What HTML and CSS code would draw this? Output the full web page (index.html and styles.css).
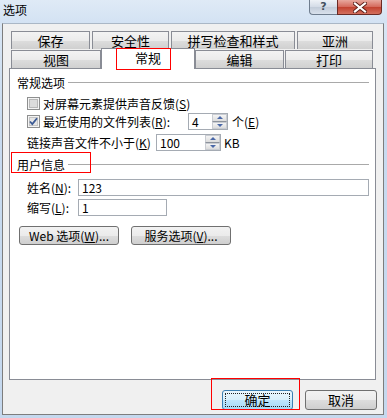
FILE: index.html
```html
<!DOCTYPE html>
<html lang="zh-CN">
<head>
  <meta charset="UTF-8">
  <title>选项</title>
  <link rel="stylesheet" href="styles.css">
</head>
<body>

  <div class="window">
    <div class="titlebar">
      <span class="title">选项</span>
      <div class="caption-btns">
        <div class="cap-help">?</div>
        <div class="cap-close">
          <svg width="14" height="11" viewBox="0 0 14 11">
            <path d="M2 1.5 L12 9.5 M12 1.5 L2 9.5" stroke="#5a1e18" stroke-width="4" stroke-linecap="square"/>
            <path d="M2 1.5 L12 9.5 M12 1.5 L2 9.5" stroke="#ffffff" stroke-width="2.2" stroke-linecap="square"/>
          </svg>
        </div>
      </div>
    </div>

    <div class="dialog">
      <div class="tabs">
        <div class="tab-row">
          <div class="tab w79">保存</div>
          <div class="tab w77">安全性</div>
          <div class="tab w124">拼写检查和样式</div>
          <div class="tab w76">亚洲</div>
        </div>
        <div class="tab-row row2">
          <div class="tab w90">视图</div>
          <div class="tab tab-active w94">常规</div>
          <div class="tab w89">编辑</div>
          <div class="tab w88 ml1">打印</div>
        </div>
      </div>

      <div class="panel">
        <div class="group-head">
          <span>常规选项</span>
          <span class="rule"></span>
        </div>

        <div class="row row1">
          <span class="check">
            <svg width="13" height="13" viewBox="0 0 13 13">
              <rect x="0.5" y="0.5" width="12" height="12" fill="#f4f4f4" stroke="#8e8f8f"/>
              <rect x="2.5" y="2.5" width="8" height="8" fill="#dcdcdc" stroke="#b8b8b8"/>
            </svg>
          </span>
          <span>对屏幕元素提供声音反馈(<u>S</u>)</span>
        </div>

        <div class="row row2">
          <span class="check">
            <svg width="13" height="13" viewBox="0 0 13 13">
              <rect x="0.5" y="0.5" width="12" height="12" fill="#f4f4f4" stroke="#8e8f8f"/>
              <rect x="2.5" y="2.5" width="8" height="8" fill="#e6e6e6" stroke="#c4c4c4"/>
              <path d="M3 6.5 L5.3 9 L10 3.2" fill="none" stroke="#3b5a94" stroke-width="1.8"/>
            </svg>
          </span>
          <span class="lbl-recent">最近使用的文件列表(<u>R</u>):</span>
          <div class="spin w40">
            <span class="spin-val">4</span>
            <div class="spin-btns">
              <span class="spin-up"></span>
              <span class="spin-down"></span>
            </div>
          </div>
          <span class="after">个(<u>E</u>)</span>
        </div>

        <div class="row row3">
          <span class="lbl-sound">链接声音文件不小于(<u>K</u>)</span>
          <div class="spin w65">
            <span class="spin-val">100</span>
            <div class="spin-btns">
              <span class="spin-up"></span>
              <span class="spin-down"></span>
            </div>
          </div>
          <span class="after kb">KB</span>
        </div>

        <div class="group-head head2">
          <span>用户信息</span>
          <span class="rule"></span>
        </div>

        <div class="field first">
          <span class="field-lbl">姓名(<u>N</u>):</span>
          <div class="textbox tb-name">123</div>
        </div>
        <div class="field">
          <span class="field-lbl">缩写(<u>L</u>):</span>
          <div class="textbox tb-init">1</div>
        </div>

        <div class="btn-row">
          <button class="btn w100">Web 选项(<u>W</u>)...</button>
          <button class="btn w100">服务选项(<u>V</u>)...</button>
        </div>
      </div>

      <div class="footer">
        <button class="btn btn-ok"><span class="focus">确定</span></button>
        <button class="btn btn-cancel">取消</button>
      </div>
    </div>

    <div class="mark mark-tab"></div>
    <div class="mark mark-user"></div>
    <div class="mark mark-ok"></div>
  </div>

</body>
</html>
```

FILE: styles.css
```css
* {
  margin: 0;
  padding: 0;
  box-sizing: border-box;
}

body {
  font-family: "Noto Sans CJK SC", "Liberation Sans", sans-serif;
  font-size: 12px;
  color: #000;
  background: #fff;
}

.window {
  position: relative;
  width: 387px;
  height: 418px;
  background: linear-gradient(#dce8f5, #c8dbf0 30%, #c5d8ee);
  overflow: hidden;
}

/* title bar */
.titlebar {
  height: 23px;
  display: flex;
  align-items: flex-start;
  background: linear-gradient(#dfeaf6, #d3e2f3);
}

.title {
  padding: 3px 0 0 3px;
  line-height: 14px;
  font-size: 12px;
}

.caption-btns {
  margin-left: auto;
  margin-right: 5px;
  display: flex;
}

.cap-help {
  width: 28px;
  height: 15px;
  border: 1px solid #6f7d8e;
  border-top: none;
  border-right: none;
  border-radius: 0 0 0 4px;
  background: linear-gradient(#eef2f7, #d3dbe6 50%, #c2ccd9 51%, #d9e1ec);
  text-align: center;
  line-height: 13px;
  font-family: "DejaVu Sans", sans-serif;
  font-size: 11px;
  font-weight: bold;
  color: #44505e;
}

.cap-close {
  width: 45px;
  height: 15px;
  border: 1px solid #6b2a24;
  border-top: none;
  border-radius: 0 0 4px 0;
  background: linear-gradient(#e8a89e, #d4685a 50%, #c2412f 51%, #d3705e);
  display: flex;
  align-items: center;
  justify-content: center;
}

/* dialog body */
.dialog {
  margin: 0 3px 0 2px;
  height: 392px;
  border: 1px solid #7d7d7d;
  border-top-color: #aab7c6;
  background: #f0f0f0;
  padding: 7px 0 0 6px;
}

.tabs {
  padding-left: 2px;
}

.tab-row {
  display: flex;
  gap: 2px;
  height: 18px;
}

.tab-row.row2 {
  gap: 0;
}

.tab {
  height: 18px;
  border: 1px solid #898c95;
  border-bottom: none;
  background: linear-gradient(#f3f3f3, #ebebeb 50%, #dddddd 51%, #d0d0d0);
  font-size: 13px;
  line-height: 17px;
  text-align: center;
  flex-shrink: 0;
}

.tab-active {
  position: relative;
  z-index: 2;
  align-self: flex-start;
  height: 21px;
  margin-top: -2px;
  background: #fff;
  line-height: 18px;
}

.w79 { width: 79px; }
.w77 { width: 77px; }
.w124 { width: 124px; }
.w76 { width: 76px; }
.w90 { width: 90px; }
.w94 { width: 94px; }
.w89 { width: 89px; }
.w88 { width: 88px; }
.ml1 { margin-left: 1px; }

/* page of options */
.panel {
  position: relative;
  z-index: 1;
  width: 367px;
  height: 312px;
  border: 1px solid #898c95;
  background: #fff;
  padding: 7px 6px 0 7px;
}

.group-head {
  display: flex;
  align-items: center;
  gap: 3px;
  height: 14px;
  line-height: 14px;
}

.group-head .rule {
  flex: 1;
  height: 1px;
  margin-top: -1px;
  background: #a9a9a9;
}

.head2 {
  margin-top: 7px;
}

.row {
  display: flex;
  align-items: center;
  height: 17px;
  padding-left: 10px;
  line-height: 14px;
}

.row1 { margin-top: 5px; }
.row2 { margin-top: 1px; }
.row3 { margin-top: 4px; }

.check {
  width: 13px;
  height: 13px;
  margin-right: 3px;
  display: flex;
}

.lbl-recent {
  width: 145px;
}

.lbl-sound {
  width: 129px;
}

.spin {
  height: 17px;
  border: 1px solid #a5abb3;
  background: #fff;
  display: flex;
  align-items: center;
  justify-content: space-between;
  padding-left: 3px;
}

.w40 { width: 40px; }
.w65 { width: 65px; }

.spin-val {
  font-size: 12px;
}

.spin-btns {
  width: 15px;
  height: 15px;
  display: flex;
  flex-direction: column;
}

.spin-up,
.spin-down {
  flex: 1;
  position: relative;
  background: linear-gradient(#f4f4f4, #dcdcdc);
  border: 1px solid #c9ccd2;
}

.spin-up {
  border-bottom-color: #8d939c;
}

.spin-up::after,
.spin-down::after {
  content: "";
  position: absolute;
  left: 4px;
  top: 1px;
  border-left: 3px solid transparent;
  border-right: 3px solid transparent;
}

.spin-up::after {
  border-bottom: 3px solid #4a68a8;
}

.spin-down::after {
  border-top: 3px solid #4a68a8;
}

.after {
  margin-left: 4px;
}

.after.kb {
  margin-left: 3px;
}

.field {
  display: flex;
  align-items: center;
  height: 17px;
  padding-left: 10px;
  margin-top: 3px;
}

.field.first {
  margin-top: 7px;
}

.field-lbl {
  width: 51px;
}

.textbox {
  height: 17px;
  border: 1px solid #a5abb3;
  background: #fff;
  padding-left: 3px;
  line-height: 15px;
}

.tb-name { width: 291px; }
.tb-init { width: 89px; }

.btn-row {
  display: flex;
  gap: 12px;
  margin-top: 10px;
  padding-left: 2px;
}

.btn {
  height: 19px;
  border: 1px solid #707070;
  border-radius: 3px;
  background: linear-gradient(#f2f2f2, #ebebeb 50%, #dddddd 51%, #cfcfcf);
  font-family: "Noto Sans CJK SC", "Liberation Sans", sans-serif;
  font-size: 12px;
  line-height: 16px;
  color: #000;
}

.w100 { width: 100px; }

.footer {
  display: flex;
  justify-content: flex-end;
  gap: 12px;
  padding: 10px 6px 0 0;
}

.footer .btn {
  height: 20px;
  font-size: 13px;
}

.btn-ok {
  width: 71px;
  border-color: #3c7fb1;
  background: linear-gradient(#eaf6fd, #d9f0fc 50%, #bee6fd 51%, #a7d9f5);
  padding: 2px;
}

.btn-ok .focus {
  display: block;
  height: 14px;
  border: 1px dotted #222;
  line-height: 12px;
}

.btn-cancel {
  width: 72px;
}

/* red annotation boxes */
.mark {
  position: absolute;
  border: 1px solid #ff0000;
  z-index: 5;
}

.mark-tab {
  left: 116px;
  top: 48px;
  width: 55px;
  height: 22px;
}

.mark-user {
  left: 11px;
  top: 152px;
  width: 80px;
  height: 21px;
}

.mark-ok {
  left: 211px;
  top: 378px;
  width: 89px;
  height: 32px;
}
```
